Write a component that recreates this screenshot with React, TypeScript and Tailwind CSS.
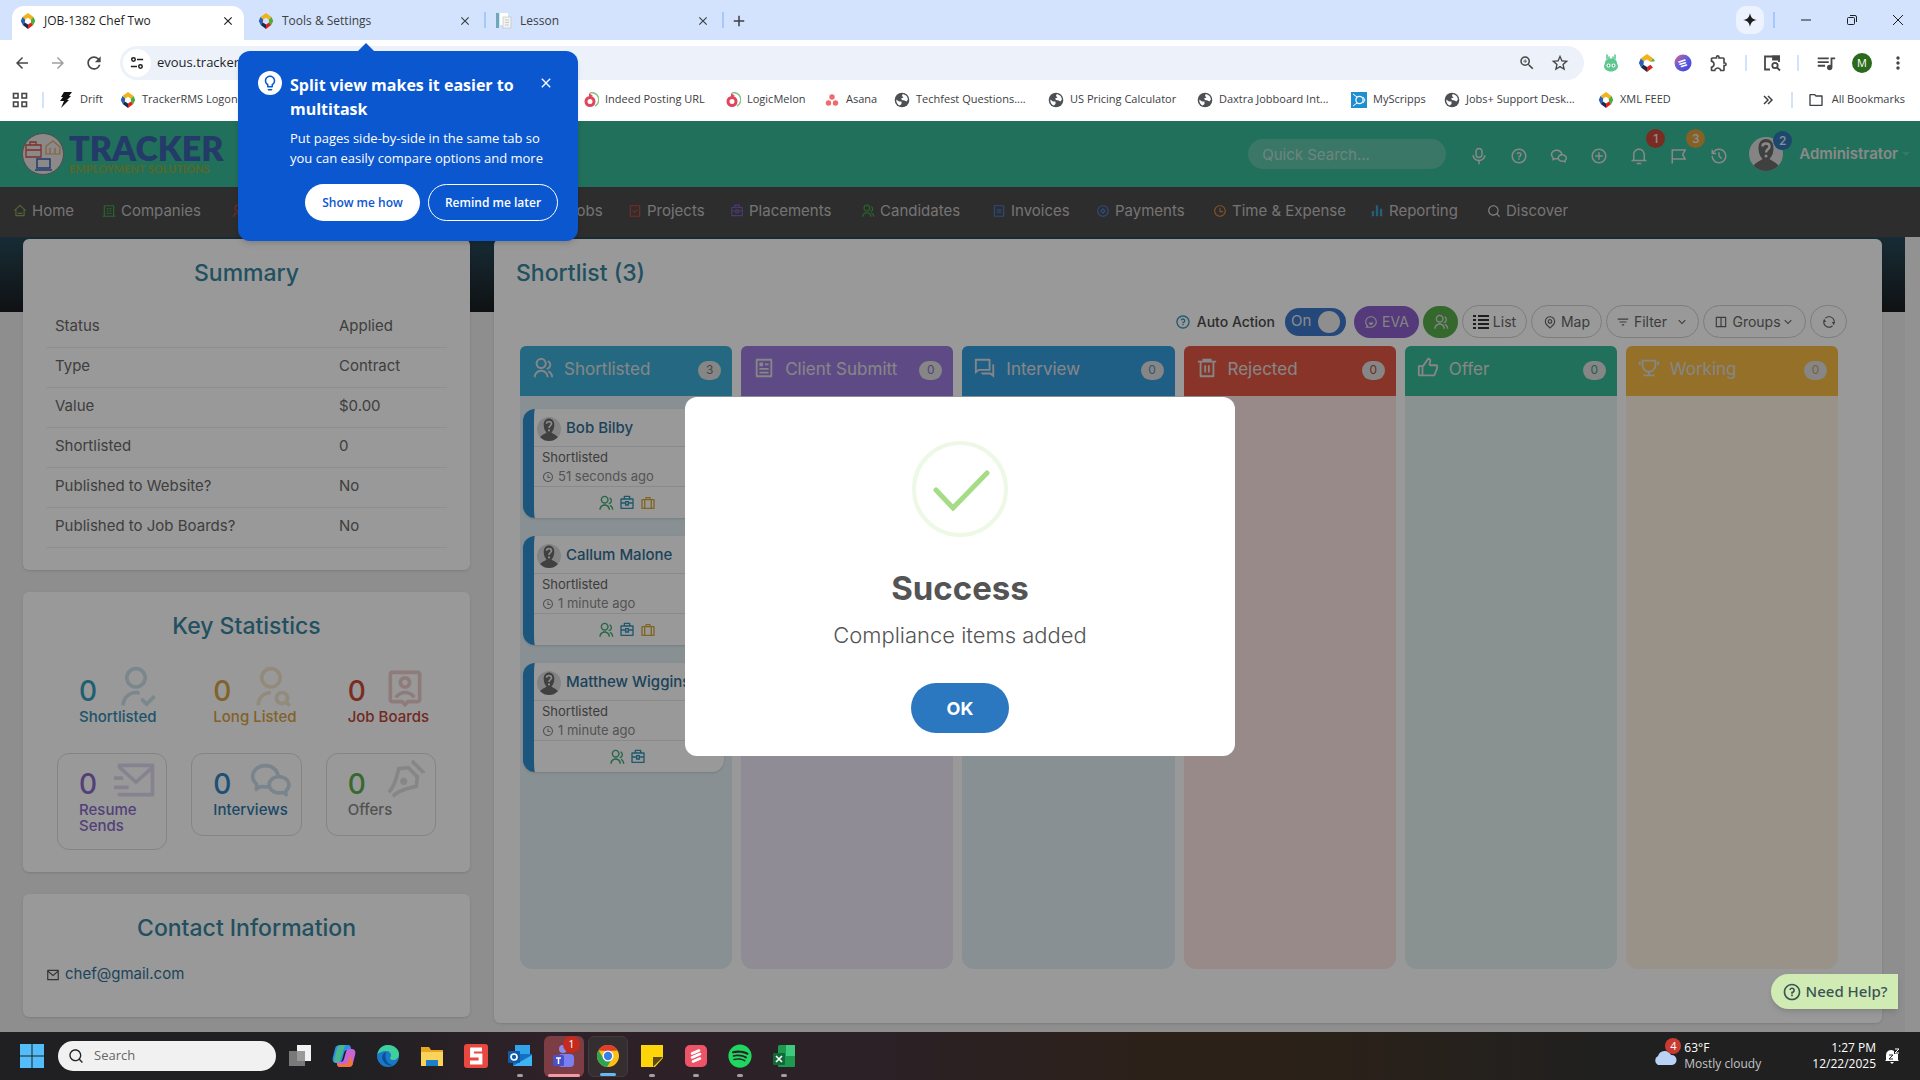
import React from "react";
import {
  RiHome3Line, RiBuilding4Line, RiContactsLine, RiBriefcaseLine, RiTaskLine,
  RiBriefcase4Line, RiGroupLine, RiBillLine, RiCopperCoinLine, RiTimeLine, RiBarChartFill, RiSearchLine,
  RiMicLine, RiQuestionLine, RiWechatLine, RiAddCircleLine, RiNotification3Line, RiFlag2Line, RiHistoryLine,
  RiUserFollowLine, RiUserSearchLine, RiAccountPinBoxLine, RiMailSendLine, RiPenNibLine, RiMailLine,
  RiArticleLine, RiQuestionAnswerLine, RiDeleteBin6Line, RiThumbUpLine, RiTrophyLine, RiSuitcaseLine,
  RiMapPinLine, RiFilter3Line, RiLayoutColumnLine, RiRefreshLine, RiArrowDownSLine,
  RiChatSmile3Line, RiFolderLine,
} from "react-icons/ri";
import {
  MdOutlineExtension, MdOutlineZoomIn, MdStarBorder, MdQueueMusic, MdMoreVert, MdArrowBack, MdArrowForward,
  MdRefresh, MdClose, MdAdd, MdOutlineLightbulb,
} from "react-icons/md";
import { FaSpotify } from "react-icons/fa";

type IconType = React.ComponentType<{ className?: string }>;

function Diamond({ className = "size-4", open = false }: { className?: string; open?: boolean }) {
  return (
    <svg viewBox="0 0 20 20" className={className} aria-hidden="true">
      <path d="M10 0 L17 5 L13.5 8.5 L10 6 L6.5 8 L3 5Z" fill="#f2b21c" />
      <path d="M3 5 L6.5 8 L6 12 L3.4 15 L1 10Z" fill="#2a5db5" />
      <path d="M3.4 15 L6 12 L10 14.5 L10 20Z" fill="#1b2a4a" />
      <path d="M10 20 L10 14.5 L13.8 12 L16.6 15Z" fill="#d8261c" />
      {!open && <path d="M16.6 15 L13.8 12 L13.5 8.5 L17 5 L19 10Z" fill="#4cae3a" />}
      {open && <path d="M13.5 8.5 L17 5 L19 8Z" fill="#4cae3a" />}
    </svg>
  );
}

function Melon() {
  return (
    <svg viewBox="0 0 16 16" className="size-4" aria-hidden="true">
      <path d="M7 1 A7 7 0 0 1 12 14" fill="none" stroke="#8bc48a" strokeWidth="1.6" />
      <circle cx="7" cy="9.5" r="4" fill="none" stroke="#e2445c" strokeWidth="3" />
      <path d="M6 1 L10 4 L6 6Z" fill="#e2445c" />
    </svg>
  );
}

function Globe() {
  return (
    <svg viewBox="0 0 16 16" className="size-4" aria-hidden="true">
      <circle cx="8" cy="8" r="7.3" fill="#4c5054" />
      <path d="M2.300 7.500 L5 9.500 L7.500 9.500 L7.500 12 L5.800 13.600 C3.500 12.700 2 10.500 2.300 7.500Z" fill="#fff" />
      <path d="M8.500 2.200 C11.500 2.200 13.800 4.500 13.900 7.500 L12.500 9.500 L10.500 8.500 L8 8 L7 6.500 L9.500 5.500 L8 4Z" fill="#fff" />
    </svg>
  );
}

function Person({ className }: { className: string }) {
  return (
    <svg viewBox="0 0 34 34" className={className} aria-hidden="true">
      <defs>
        <clipPath id="person-clip"><circle cx="17" cy="17" r="17" /></clipPath>
      </defs>
      <g clipPath="url(#person-clip)">
        <rect width="34" height="34" fill="#dcdcdc" />
        <path d="M3 34 C3 26 10 25 13.500 22 C10.500 19 9.500 15 9.500 11 C9.500 5 13 2 17 2 C21 2 24.500 5 24.500 11 C24.500 15 23.500 19 20.500 22 C24 25 31 26 31 34Z" fill="#6b6b6b" />
        <path d="M13.500 9.500 C13.500 5.500 20.500 5.500 20.500 9.500 C20.500 12.500 17 12 17 15.500" fill="none" stroke="#e6e6e6" strokeWidth="2.400" />
        <circle cx="17" cy="19" r="1.500" fill="#e6e6e6" />
      </g>
    </svg>
  );
}

const bookmarks: { label: string; icon: React.ReactNode; w: string }[] = [
  { label: "Indeed Posting URL", icon: <Melon />, w: "w-[142px]" },
  { label: "LogicMelon", icon: <Melon />, w: "w-[99px]" },
  {
    label: "Asana",
    icon: (
      <svg viewBox="0 0 16 16" className="size-4" aria-hidden="true">
        <circle cx="8" cy="5" r="2.700" fill="#f06a6a" /><circle cx="4.500" cy="11" r="2.700" fill="#f06a6a" /><circle cx="11.500" cy="11" r="2.700" fill="#f06a6a" />
      </svg>
    ),
    w: "w-[70px]",
  },
  { label: "Techfest Questions....", icon: <Globe />, w: "w-[154px]" },
  { label: "US Pricing Calculator", icon: <Globe />, w: "w-[149px]" },
  { label: "Daxtra Jobboard Int...", icon: <Globe />, w: "w-[154px]" },
  {
    label: "MyScripps",
    icon: (
      <svg viewBox="0 0 16 16" className="size-4" aria-hidden="true">
        <rect width="16" height="16" fill="#1f8fd0" />
        <path d="M2 2 L6 5 M2 14 L6 11" stroke="#fff" strokeWidth="1" />
        <circle cx="8.500" cy="8" r="3.600" fill="none" stroke="#fff" strokeWidth="1.200" />
        <path d="M12 5 L14 8 L12 11" fill="none" stroke="#fff" strokeWidth="1" />
      </svg>
    ),
    w: "w-[93px]",
  },
  { label: "Jobs+ Support Desk...", icon: <Globe />, w: "w-[154px]" },
  { label: "XML FEED", icon: <Diamond />, w: "w-[90px]" },
];

function TabStrip() {
  return (
    <div className="flex h-10 items-end bg-[#d3e3fd] text-[12px] text-[#3c4043]">
      <div className="ml-3 flex h-[34px] w-[232px] items-center rounded-t-xl bg-white pr-[9px] pb-1 pl-2">
        <Diamond className="size-4" />
        <span className="ml-2 flex-1 text-[#1f1f1f]">JOB-1382 Chef Two</span>
        <button aria-label="Close tab"><MdClose className="size-3.5 text-[#1f1f1f]" /></button>
      </div>
      <div className="flex h-[34px] w-60 items-center pr-3 pb-1 pl-3.5">
        <Diamond className="size-4" />
        <span className="ml-2 flex-1">Tools &amp; Settings</span>
        <button aria-label="Close tab"><MdClose className="size-3.5" /></button>
      </div>
      <div className="mb-3 h-4 w-0.5 bg-[#a8c7fa]" />
      <div className="flex h-[34px] w-[236px] items-center pr-3 pb-1 pl-2.5">
        <svg viewBox="0 0 16 16" className="size-4" aria-hidden="true">
          <rect x="0" y="0" width="3" height="15" fill="#6fa8b8" /><rect x="4" y="0" width="8" height="12" fill="#fff" /><rect x="7" y="4" width="8" height="11" fill="#f3f3f0" stroke="#b9bdc4" strokeWidth=".6" />
          <path d="M9 7h4M9 9.500h4M9 12h4" stroke="#b9bdc4" strokeWidth=".8" />
        </svg>
        <span className="ml-2 flex-1">Lesson</span>
        <button aria-label="Close tab"><MdClose className="size-3.5" /></button>
      </div>
      <div className="mb-3 h-4 w-0.5 bg-[#a8c7fa]" />
      <button aria-label="New tab" className="mb-2.5 ml-1.5"><MdAdd className="size-[18px]" /></button>
      <div className="mb-1.5 ml-auto flex items-center text-[#1f1f1f]">
        <button aria-label="Assistant" className="grid size-7 place-items-center rounded-[10px] bg-[#edf3fe]">
          <svg viewBox="0 0 16 16" className="size-3.5"><path d="M8 0C8.800 5 11 7.200 16 8 11 8.800 8.800 11 8 16 7.200 11 5 8.800 0 8 5 7.200 7.200 5 8 0Z" fill="currentColor" /></svg>
        </button>
        <div className="mx-[9px] h-4 w-0.5 bg-[#a8c7fa]" />
        <button aria-label="Minimize" className="grid w-11 place-items-center"><svg viewBox="0 0 12 12" className="size-3"><path d="M1 6h10" stroke="currentColor" /></svg></button>
        <button aria-label="Restore" className="grid w-12 place-items-center"><svg viewBox="0 0 12 12" className="size-3" fill="none" stroke="currentColor"><rect x="1.500" y="3.500" width="7" height="7" rx="1" /><path d="M4 1.500h5a1.500 1.500 0 0 1 1.500 1.500v5" /></svg></button>
        <button aria-label="Close" className="grid w-11 place-items-center"><svg viewBox="0 0 12 12" className="size-3"><path d="M1 1l10 10M11 1L1 11" stroke="currentColor" /></svg></button>
      </div>
    </div>
  );
}

function Toolbar() {
  return (
    <div className="flex h-[46px] items-center bg-white pr-3 pl-[13px] text-[#474747]">
      <button aria-label="Back"><MdArrowBack className="size-[18px]" /></button>
      <button aria-label="Forward" className="ml-[18px] text-[#a0a0a0]"><MdArrowForward className="size-[18px]" /></button>
      <button aria-label="Reload" className="ml-[17px]"><MdRefresh className="size-5" /></button>
      <div className="ml-4 flex h-[34px] flex-1 items-center rounded-full bg-[#ecf1fa] pr-3.5 pl-[3px]">
        <button aria-label="Site information" className="grid size-7 place-items-center rounded-full bg-white">
          <svg viewBox="0 0 16 16" className="size-3.5" fill="none" stroke="#1f1f1f" strokeWidth="1.700"><circle cx="4" cy="4" r="2" /><path d="M8 4h7M1 12h7" /><circle cx="12" cy="12" r="2" /></svg>
        </button>
        <input aria-label="Address" defaultValue="evous.tracker-rms.com" className="ml-1.5 min-w-0 flex-1 bg-transparent text-[13px] text-[#1f1f1f] outline-none" />
        <button aria-label="Zoom"><MdOutlineZoomIn className="size-[18px]" /></button>
        <button aria-label="Bookmark this tab" className="ml-3.5"><MdStarBorder className="size-5" /></button>
      </div>
      <div className="ml-[18px] flex items-center">
        <svg viewBox="0 0 18 18" className="size-[18px]" aria-hidden="true">
          <path d="M5 1v4M13 1v4M7 3v2M11 3v2" stroke="#3cba7c" strokeWidth="1.300" strokeLinecap="round" />
          <path d="M3 9c0-3 3-4.500 6-4.500S15 6 15 9l1 3c0 3-3 5.500-7 5.500S2 15 2 12Z" fill="#5cc78f" />
          <circle cx="6.500" cy="11.500" r="2" fill="#fff" /><circle cx="11.500" cy="11.500" r="2" fill="#fff" />
          <circle cx="6.500" cy="11.500" r=".9" fill="#2a9a62" /><circle cx="11.500" cy="11.500" r=".9" fill="#2a9a62" />
        </svg>
        <Diamond open className="ml-[18px] size-[18px]" />
        <svg viewBox="0 0 18 18" className="ml-[18px] size-[18px]" aria-hidden="true">
          <defs><linearGradient id="ext" x1="0" y1="0" x2="1" y2="1"><stop offset="0" stopColor="#e0608c" /><stop offset=".5" stopColor="#5b5be0" /><stop offset="1" stopColor="#4b3fd0" /></linearGradient></defs>
          <circle cx="9" cy="9" r="8.500" fill="url(#ext)" />
          <path d="M5 8l6-2M6 10.300l5.500-1.500M7.500 12.500l5-1.500" stroke="#fff" strokeWidth="1.600" strokeLinecap="round" />
        </svg>
        <button aria-label="Extensions" className="ml-[17px]"><MdOutlineExtension className="size-5" /></button>
        <div className="mx-4 h-4 w-0.5 bg-[#d3e3fd]" />
        <svg viewBox="0 0 18 18" className="size-[18px]" fill="none" stroke="#474747" strokeWidth="1.800" aria-hidden="true">
          <path d="M7 15.500H2V2.500h14V8" /><path d="M10 2.500h6v3h-6Z" fill="#474747" /><circle cx="12" cy="11.500" r="2.700" /><path d="M14 13.500l3 3" />
        </svg>
        <div className="mx-4 h-4 w-0.5 bg-[#d3e3fd]" />
        <MdQueueMusic className="size-[22px]" />
        <button aria-label="Profile" className="ml-[15px] grid size-5 place-items-center rounded-full bg-[#2b6a1c] text-[11px] text-white">M</button>
        <button aria-label="Menu" className="ml-4"><MdMoreVert className="size-5" /></button>
      </div>
    </div>
  );
}

function BookmarkBar() {
  return (
    <div className="flex h-[35px] items-center bg-white pb-2 pl-3 text-[11px] whitespace-nowrap text-[#3c4043]">
      <svg viewBox="0 0 16 16" className="size-4" fill="none" stroke="#474747" strokeWidth="1.600" aria-hidden="true"><rect x="1.500" y="1.500" width="4.500" height="4.500" /><rect x="10" y="1.500" width="4.500" height="4.500" /><rect x="1.500" y="10" width="4.500" height="4.500" /><rect x="10" y="10" width="4.500" height="4.500" /></svg>
      <div className="ml-3.5 h-4 w-0.5 bg-[#d3e3fd]" />
      <a href="#drift" className="ml-[14px] flex w-[62px] items-center gap-1.5">
        <svg viewBox="0 0 16 16" className="size-4" aria-hidden="true"><path d="M6 0h8l-3 4h2l-4 4h2L3 16l3-7H2l3-4H3Z" fill="#111" /></svg>
        Drift
      </a>
      <a href="#logon" className="flex w-[463px] items-center gap-1.5"><Diamond /> TrackerRMS Logon</a>
      {bookmarks.map((b) => (
        <a key={b.label} href="#bookmark" className={`flex items-center gap-1.5 ${b.w}`}>{b.icon}{b.label}</a>
      ))}
      <button className="mr-[18px] ml-auto" aria-label="More bookmarks">
        <svg viewBox="0 0 10 10" className="size-2.5" fill="none" stroke="#3c4043" strokeWidth="1.500"><path d="M1 1l4 4-4 4M5 1l4 4-4 4" /></svg>
      </button>
      <div className="h-4 w-0.5 bg-[#d3e3fd]" />
      <button className="mr-[15px] ml-[15px] flex items-center gap-2"><RiFolderLine className="size-4" />All Bookmarks</button>
    </div>
  );
}

function SplitViewTip() {
  return (
    <div className="absolute top-[51px] left-[238px] z-30 w-[340px] rounded-xl bg-[#0b57d0] p-5 text-white shadow-md">
      <div className="absolute -top-2 left-[120px] border-x-8 border-b-8 border-x-transparent border-b-[#0b57d0]" />
      <div className="flex items-start">
        <span className="grid size-6 place-items-center rounded-full bg-white text-[#0b57d0]"><MdOutlineLightbulb className="size-[18px]" /></span>
        <h2 className="mt-0.5 ml-2 flex-1 text-[16px] leading-6 font-bold">Split view makes it easier to<br />multitask</h2>
        <button aria-label="Dismiss" className="mt-1 mr-1"><MdClose className="size-4" /></button>
      </div>
      <p className="mt-[7px] ml-8 text-[13px] leading-5 whitespace-nowrap">Put pages side-by-side in the same tab so<br />you can easily compare options and more</p>
      <div className="mt-4 flex justify-end gap-2 text-[12px] font-semibold">
        <button className="h-[37px] w-[115px] rounded-full bg-white text-[#0b57d0]">Show me how</button>
        <button className="h-[37px] w-[130px] rounded-full border border-white">Remind me later</button>
      </div>
    </div>
  );
}

const nav: { label: string; Icon: IconType; color: string; w: string }[] = [
  { label: "Home", Icon: RiHome3Line, color: "text-[#8aa858]", w: "w-[89px]" },
  { label: "Companies", Icon: RiBuilding4Line, color: "text-[#3fae49]", w: "w-[130px]" },
  { label: "Contacts", Icon: RiContactsLine, color: "text-[#c94a3e]", w: "w-[317px]" },
  { label: "Jobs", Icon: RiBriefcaseLine, color: "text-[#3e8ec9]", w: "w-[79px]" },
  { label: "Projects", Icon: RiTaskLine, color: "text-[#c94a3e]", w: "w-[102px]" },
  { label: "Placements", Icon: RiBriefcase4Line, color: "text-[#7d5fc4]", w: "w-[131px]" },
  { label: "Candidates", Icon: RiGroupLine, color: "text-[#3fae49]", w: "w-[131px]" },
  { label: "Invoices", Icon: RiBillLine, color: "text-[#4a7fd0]", w: "w-[104px]" },
  { label: "Payments", Icon: RiCopperCoinLine, color: "text-[#4a7fd0]", w: "w-[117px]" },
  { label: "Time & Expense", Icon: RiTimeLine, color: "text-[#d98a3a]", w: "w-[157px]" },
  { label: "Reporting", Icon: RiBarChartFill, color: "text-[#3aa0c4]", w: "w-[117px]" },
  { label: "Discover", Icon: RiSearchLine, color: "text-[#dddddd]", w: "w-[90px]" },
];

function Badge({ children, color }: { children: string; color: string }) {
  return <span className={`absolute grid size-[19px] place-items-center rounded-full text-[12px] font-medium text-[#ededed] ${color}`}>{children}</span>;
}

function AppHeader() {
  return (
    <header>
      <div className="flex h-[66px] items-center bg-[#38bb98] pr-2.5 pl-[22px] text-[#e4e4e4]">
        <svg viewBox="0 0 42 42" className="size-[42px]" fill="none" aria-hidden="true">
          <circle cx="21" cy="21" r="20.500" fill="#e9e4e4" stroke="#8a7d80" />
          <path d="M4 12h15v12H4zM8 12V9h6v3M4 17h15" stroke="#d2524c" strokeWidth="1.300" />
          <path d="M24 21V13l7-5 7 6v7zM28 21v-6M33 21v-6" stroke="#dba764" strokeWidth="1.200" />
          <path d="M15 26h13v9H15zM13 37h17" stroke="#3c62b4" strokeWidth="1.500" />
        </svg>
        <div className="ml-[5px] font-[Lato] whitespace-nowrap">
          <div className="text-[34px] leading-[30px] font-extrabold text-[#3c62ae]">TRACKER</div>
          <div className="text-[11px] leading-3 font-bold text-[#93ad3e]">EMPLOYMENT SOLUTIONS</div>
        </div>
        <input aria-label="Quick Search" placeholder="Quick Search..." className="mr-6 ml-auto h-[30px] w-[198px] rounded-full bg-[#62c7ab] px-3.5 text-[15px] placeholder:text-[#b5dfd2]" />
        <div className="flex items-center gap-[22px] pt-1">
          <button aria-label="Voice"><RiMicLine className="size-[18px]" /></button>
          <button aria-label="Help"><RiQuestionLine className="size-[18px]" /></button>
          <button aria-label="Messages"><RiWechatLine className="size-[18px]" /></button>
          <button aria-label="Add"><RiAddCircleLine className="size-[18px]" /></button>
          <button aria-label="Alerts" className="relative"><RiNotification3Line className="size-[18px]" /><Badge color="bg-[#cc4a3a] -top-[18px] left-4">1</Badge></button>
          <button aria-label="Flags" className="relative"><RiFlag2Line className="size-[18px]" /><Badge color="bg-[#e0a03c] -top-[18px] left-4">3</Badge></button>
          <button aria-label="History"><RiHistoryLine className="size-[18px]" /></button>
        </div>
        <button className="relative ml-[21px] flex items-center text-[15px] font-semibold">
          <Person className="size-[34px]" />
          <Badge color="bg-[#2f78b8] -top-1.5 left-6">2</Badge>
          <span className="ml-4">Administrator</span>
          <span className="ml-1 border-x-4 border-t-4 border-x-transparent border-t-[#5ccaac]" />
        </button>
      </div>
      <nav className="flex h-[50px] items-center bg-[#4e4b4c] pb-0.5 pl-[13px] text-[15px] whitespace-nowrap text-[#c2c2c2]">
        {nav.map(({ label, Icon, color, w }) => (
          <a key={label} href={`#${label}`} className={`flex items-center gap-[5px] ${w}`}><Icon className={`size-3.5 ${color}`} />{label}</a>
        ))}
      </nav>
    </header>
  );
}

const summary = [
  ["Status", "Applied"], ["Type", "Contract"], ["Value", "$0.00"],
  ["Shortlisted", "0"], ["Published to Website?", "No"], ["Published to Job Boards?", "No"],
];

const stats: { label: string; Icon: IconType; num: string; text: string; box: string }[] = [
  { label: "Shortlisted", Icon: RiUserFollowLine, num: "text-[#369fbd]", text: "text-[#338cb0]", box: "border-transparent" },
  { label: "Long Listed", Icon: RiUserSearchLine, num: "text-[#d8a444]", text: "text-[#d8a444]", box: "border-transparent" },
  { label: "Job Boards", Icon: RiAccountPinBoxLine, num: "text-[#cc4a3a]", text: "text-[#bd4538]", box: "border-transparent" },
  { label: "Resume Sends", Icon: RiMailSendLine, num: "text-[#8c6cc9]", text: "text-[#8c6cc9]", box: "border-[#dcdcdc]" },
  { label: "Interviews", Icon: RiWechatLine, num: "text-[#2f85c4]", text: "text-[#2f78ac]", box: "border-[#dcdcdc]" },
  { label: "Offers", Icon: RiPenNibLine, num: "text-[#5cb04f]", text: "text-[#888888]", box: "border-[#dcdcdc]" },
];

const cardTitle = "text-center text-[23px] leading-8 font-medium text-[#3886a0]";

function Sidebar() {
  return (
    <aside className="flex w-[447px] shrink-0 flex-col gap-[22px] self-start text-[15px] text-[#696969]">
      <section className="rounded-md bg-white px-[23px] pt-[18px] pb-[22px] shadow">
        <h2 className={cardTitle}>Summary</h2>
        <table className="mt-[18px] w-full">
          <tbody>
            {summary.map(([k, v]) => (
              <tr key={k} className="h-10 border-b border-[#eeeeee]">
                <th scope="row" className="pb-0.5 pl-[9px] text-left font-normal">{k}</th>
                <td className="w-[108px] pb-0.5">{v}</td>
              </tr>
            ))}
          </tbody>
        </table>
      </section>
      <section className="rounded-md bg-white px-[34px] pt-[18px] pb-[22px] shadow">
        <h2 className={cardTitle}>Key Statistics</h2>
        <div className="mt-[18px] grid grid-cols-3 items-start gap-x-6 gap-y-2.5">
          {stats.map(({ label, Icon, num, text, box }) => (
            <div key={label} className={`min-h-[83px] rounded-xl border pr-2 pb-[15px] pl-[21px] ${box}`}>
              <div className="flex h-12 items-center justify-between pt-3">
                <span className={`text-[28px] font-medium ${num}`}>0</span>
                <Icon className={`-mt-2 size-11 opacity-25 ${text}`} />
              </div>
              <div className={`leading-4 font-medium ${label.includes("Resume") ? "" : "whitespace-nowrap"} ${text}`}>{label}</div>
            </div>
          ))}
        </div>
      </section>
      <section className="rounded-md bg-white px-[23px] pt-[18px] pb-[30px] shadow">
        <h2 className={cardTitle}>Contact Information</h2>
        <a href="mailto:chef@gmail.com" className="mt-[19px] flex h-6 items-center gap-[5px] text-[#337199]"><RiMailLine className="size-3.5 text-[#555555]" />chef@gmail.com</a>
      </section>
    </aside>
  );
}

const columns: { label: string; Icon: IconType; count: number; head: string; body: string; num: string }[] = [
  { label: "Shortlisted", Icon: RiGroupLine, count: 3, head: "bg-[#3cb0d8]", body: "bg-[#e3f0f5]", num: "text-[#777777]" },
  { label: "Client Submitt", Icon: RiArticleLine, count: 0, head: "bg-[#9d7ee0]", body: "bg-[#eee9fb]", num: "text-[#8c6cc9]" },
  { label: "Interview", Icon: RiQuestionAnswerLine, count: 0, head: "bg-[#359ee0]", body: "bg-[#e4f0f7]", num: "text-[#5590b8]" },
  { label: "Rejected", Icon: RiDeleteBin6Line, count: 0, head: "bg-[#e45843]", body: "bg-[#fce6e3]", num: "text-[#b84a3c]" },
  { label: "Offer", Icon: RiThumbUpLine, count: 0, head: "bg-[#38bb98]", body: "bg-[#e5f4f0]", num: "text-[#3f9a82]" },
  { label: "Working", Icon: RiTrophyLine, count: 0, head: "bg-[#f8bb44]", body: "bg-[#fdf3e3]", num: "text-[#c9a05a]" },
];

const people = [
  { name: "Bob Bilby", ago: "51 seconds ago", bag: true },
  { name: "Callum Malone", ago: "1 minute ago", bag: true },
  { name: "Matthew Wiggins", ago: "1 minute ago", bag: false },
];

function CandidateCard({ name, ago, bag }: { name: string; ago: string; bag: boolean }) {
  return (
    <article className="rounded-xl border-l-[11px] border-[#2f90d0] bg-white text-[13px] shadow">
      <div className="flex h-[38px] items-center gap-[5px] border-b border-[#e6e6e6] pt-0.5 pl-[3px]">
        <Person className="size-6" />
        <a href="#candidate" className="text-[15px] font-medium whitespace-nowrap text-[#2f6f96]">{name}</a>
      </div>
      <div className="h-10 border-b border-[#e6e6e6] pt-px pl-2 leading-[19px] text-[#666666]">
        <div>Shortlisted</div>
        <div className="flex items-center gap-1 text-[#8c8c8c]"><RiTimeLine className="size-3" />{ago}</div>
      </div>
      <div className="flex h-[31px] items-center justify-center gap-[5px] pr-1">
        <RiGroupLine className="size-4 text-[#3fa878]" />
        <RiBriefcase4Line className="size-4 text-[#3593b5]" />
        {bag && <RiSuitcaseLine className="size-4 text-[#d8a83c]" />}
      </div>
    </article>
  );
}

const pill = "flex h-[33px] items-center justify-center gap-1 rounded-full border border-[#d0d0d0] text-[#666666]";

function Shortlist() {
  return (
    <main className="flex flex-1 flex-col rounded-md bg-white pt-[18px] pb-[54px] shadow">
      <h1 className="pl-[22px] text-[23px] leading-8 font-medium text-[#3886a0]">Shortlist (3)</h1>
      <div className="mt-4 flex items-center justify-end gap-1 pr-[35px] text-[14px] whitespace-nowrap">
        <RiQuestionLine className="size-4 text-[#3796b4]" />
        <label htmlFor="auto" className="ml-0.5 font-medium text-[#4a4a4a]">Auto Action</label>
        <button id="auto" role="switch" aria-checked="true" className="mx-1 ml-1.5 flex h-7 w-[61px] items-center justify-between rounded-full bg-[#3f78cc] pr-1.5 pl-1.5 text-[15px] text-[#e6e6e6]">On<span className="size-[22px] rounded-full bg-[#ededed]" /></button>
        <button className="flex h-8 w-[65px] items-center justify-center gap-1 rounded-full bg-[#8c62cc] text-[#dddddd]"><RiChatSmile3Line className="size-3.5" />EVA</button>
        <button aria-label="Candidates" className="grid h-8 w-[35px] place-items-center rounded-full bg-[#57ae4c] text-[#dddddd]"><RiGroupLine className="size-4" /></button>
        <button className={`${pill} w-[65px]`}>
          <svg viewBox="0 0 16 16" className="size-4" stroke="#333333" strokeWidth="2" aria-hidden="true"><path d="M0 2h3M5 2h11M0 6h3M5 6h11M0 10h3M5 10h11M0 14h3M5 14h11" /></svg>List
        </button>
        <button className={`${pill} w-[71px]`}><RiMapPinLine className="size-3.5" />Map</button>
        <button className={`${pill} w-[93px]`}><RiFilter3Line className="size-3.5" />Filter<RiArrowDownSLine className="ml-1 size-3.5" /></button>
        <button className={`${pill} w-[103px]`}><RiLayoutColumnLine className="size-3.5" />Groups<RiArrowDownSLine className="-ml-1 size-3.5" /></button>
        <button aria-label="Refresh" className={`${pill} w-[37px]`}><RiRefreshLine className="size-3.5" /></button>
      </div>
      <div className="mt-2 flex flex-1 gap-[9px] pr-11 pl-[26px]">
        {columns.map(({ label, Icon, count, head, body, num }, i) => (
          <section key={label} className={`min-w-0 flex-1 overflow-hidden rounded-t-md rounded-b-xl ${body}`}>
            <header className={`flex h-[50px] items-center pr-[11px] pb-0.5 pl-3 text-[#e0e0e0] ${head}`}>
              <Icon className="mb-1 size-[22px] shrink-0" />
              <h3 className="ml-2.5 flex-1 text-[17px] whitespace-nowrap">{label}</h3>
              <span className={`grid h-[19px] w-[23px] shrink-0 place-items-center rounded-full bg-[#e0e0e0] text-[12px] ${num}`}>{count}</span>
            </header>
            {i === 0 && (
              <div className="flex flex-col gap-[18px] pt-[13px] pr-2 pl-[3px]">
                {people.map((p) => <CandidateCard key={p.name} {...p} />)}
              </div>
            )}
          </section>
        ))}
      </div>
    </main>
  );
}

function SuccessDialog() {
  return (
    <div className="absolute inset-0 z-10 grid place-items-center bg-black/40">
      <div role="dialog" aria-modal="true" aria-labelledby="dialog-title" className="flex w-[550px] flex-col items-center rounded-xl bg-white pt-11 pb-[23px] text-[#545454]">
        <svg viewBox="0 0 96 96" className="size-24" fill="none" aria-hidden="true">
          <circle cx="48" cy="48" r="46" stroke="#edf8e6" strokeWidth="4" />
          <path d="M24 49L41 67L75 32" stroke="#a5dc86" strokeWidth="5" strokeLinecap="round" />
        </svg>
        <h2 id="dialog-title" className="mt-[31px] text-[33px] leading-10 font-bold">Success</h2>
        <p className="mt-[13px] text-[22px] leading-7 font-light">Compliance items added</p>
        <button className="mt-[34px] h-[50px] w-[98px] rounded-full bg-[#2b77c0] text-[18px] font-bold text-white">OK</button>
      </div>
    </div>
  );
}

const taskIcons: { name: string; art: React.ReactNode; state?: string }[] = [
  { name: "Task View", art: <><rect x="9" y="1" width="14" height="16" fill="#f2f2f2" /><rect x="1" y="7" width="16" height="15" fill="#8a8a8a" fillOpacity=".85" /></> },
  { name: "Copilot", art: <><path d="M8 1h8c2 0 2.500 1 3 3l.5 2h-4c-2 0-3 1-3.500 3l-2 7c-.5 2-1.500 3-3.500 3H4c-3 0-4-3-3-6l2-8c.6-3 2-4 5-4Z" fill="#2f8fe8" /><path d="M3 13l2-8c.6-3 2-4 5-4h3L8 17c-.5 1.500-1 2-2 2H4c-2 0-2-3-1-6Z" fill="#46b98c" /><path d="M16 23H8c-2 0-2.500-1-3-3l-.500-2h4c2 0 3-1 3.500-3l2-7c.5-2 1.500-3 3.500-3H20c3 0 4 3 3 6l-2 8c-.6 3-2 4-5 4Z" fill="#c964d8" /><path d="M16 23H8c-2 0-2.500-1-3-3h7c3 0 4-2 5-5l1-4 3 8c-.6 3-2 4-5 4Z" fill="#f0743f" /></> },
  { name: "Edge", art: <><circle cx="12" cy="12" r="11" fill="#1b78c8" /><path d="M1.500 10C3 3 8 1 12 1c6 0 11 4 11 9 0 4-3 6-6 6-2 0-3-1-3-2 0-1 1-1 1-3 0-2-2-4-5-4-4 0-7 2-8.500 3Z" fill="#3fcf9a" /><path d="M10 8c-4 1-5 6-2 10 2 3 6 4 9 3-6 0-9-7-7-13Z" fill="#0c4f94" /></> },
  { name: "File Explorer", art: <><path d="M1 3h8l2 3h12v16H1Z" fill="#e8a820" /><path d="M1 8h22v14H1Z" fill="#fbd35a" /><path d="M6 22v-6h12v6Z" fill="#1d7fc4" /></> },
  { name: "Snagit", art: <><rect width="24" height="24" rx="3" fill="#e8483f" /><path d="M18 5.500H8v6h8.500v7H6" fill="none" stroke="#fff" strokeWidth="3.800" /></> },
  { name: "Outlook", state: "dot", art: <><rect x="7" y="1" width="15" height="14" fill="#31a3ec" /><path d="M5 10h19v12H5Z" fill="#1471c0" /><path d="M5 22l19-11v11Z" fill="#3fb4f4" /><rect y="7" width="12" height="12" rx="1" fill="#0f5ba8" /><circle cx="6" cy="13" r="3" fill="none" stroke="#fff" strokeWidth="1.700" /></> },
  { name: "Teams", state: "alert", art: <><circle cx="11" cy="5" r="4" fill="#8b8cf0" /><rect x="6" y="10" width="16" height="13" rx="4" fill="#7b7ff0" /><rect x="1" y="11" width="11" height="11" rx="1.500" fill="#4a50c8" /><path d="M4 14h5M6.500 14v6" stroke="#fff" strokeWidth="1.500" /></> },
  { name: "Chrome", state: "active", art: <><circle cx="12" cy="12" r="11" fill="#fbc116" /><path d="M2.500 6.500A11 11 0 0 1 21.500 6.500L12 7Z" fill="#e33b2e" /><path d="M2.500 6.500A11 11 0 0 0 11 23L16 15 8 15Z" fill="#31a350" /><circle cx="12" cy="12" r="5.500" fill="#fff" /><circle cx="12" cy="12" r="4.200" fill="#3a7ee8" /></> },
  { name: "Sticky Notes", state: "dot", art: <><path d="M1 1h22v13l-8 9H1Z" fill="#fcd60a" /><path d="M13 23v-10h10Z" fill="#5b4a1a" /></> },
  { name: "Scribe", state: "dot", art: <><rect x="1" y="1" width="22" height="22" rx="5" fill="#ef5367" /><path d="M8 9.500l7-3M8 13.500l8-3.500M9 17.500l7-3" stroke="#fff" strokeWidth="2.600" strokeLinecap="round" /></> },
  { name: "Spotify", state: "dot", art: <FaSpotify size={24} color="#1ed760" /> },
  { name: "Excel", state: "dot", art: <><rect x="6" y="1" width="17" height="22" rx="1.500" fill="#1e9a50" /><rect x="14" y="1" width="9" height="11" fill="#3ecb7e" /><rect x="1" y="9" width="12" height="12" rx="1" fill="#0f6a37" /><path d="M4 12l6 6M10 12l-6 6" stroke="#fff" strokeWidth="1.600" /></> },
];

function Taskbar() {
  return (
    <footer className="flex h-12 items-center bg-[linear-gradient(90deg,#202022_0%,#202022_18%,#2e2127_28%,#2b2126_46%,#2c2119_60%,#2a2119_70%,#202020_84%)] pl-5 text-[12px] text-white">
      <button aria-label="Start">
        <svg viewBox="0 0 24 24" className="size-6" fill="#52bdf8"><path d="M0 0h11.500v11.500H0zM12.500 0H24v11.500H12.500zM0 12.500h11.500V24H0zM12.500 12.500H24V24H12.500z" /></svg>
      </button>
      <label className="mr-0.5 ml-3.5 flex h-[30px] w-[218px] items-center gap-2.5 rounded-full bg-[#f1f1f1] pl-2.5 text-[#222222]">
        <RiSearchLine className="size-4" />
        <input aria-label="Search" placeholder="Search" className="w-36 bg-transparent text-[13px] placeholder:text-[#666666]" />
      </label>
      {taskIcons.map((t) => (
        <button
          key={t.name}
          aria-label={t.name}
          className={`relative mx-0.5 grid h-[41px] w-10 place-items-center rounded-md ${t.state === "alert" ? "bg-[#7d3d45]" : t.state === "active" ? "border border-[#403b3d] bg-[#352e31]" : ""}`}
        >
          <svg viewBox="0 0 24 24" className="size-6">{t.art}</svg>
          {t.name === "Teams" && <span className="absolute top-0 right-1 grid size-[17px] place-items-center rounded-full bg-[#c42b1c] text-[11px]">1</span>}
          {t.state === "dot" && <span className="absolute bottom-0 h-[3px] w-1.5 rounded-full bg-[#a0a0a0]" />}
          {t.state === "alert" && <span className="absolute bottom-0 h-[3px] w-8 rounded-full bg-[#f39aa5]" />}
          {t.state === "active" && <span className="absolute bottom-0 h-[3px] w-4 rounded-full bg-[#6ab8f0]" />}
        </button>
      ))}
      <div className="relative mr-[7px] ml-auto">
        <svg viewBox="0 0 24 24" className="size-6" aria-hidden="true"><path d="M5 21a5 5 0 0 1 0-9 7 7 0 0 1 13-1 5 5 0 0 1 1 10Z" fill="#b9d2f5" /></svg>
        <span className="absolute -top-1.5 left-3 grid size-4 place-items-center rounded-full bg-[#c93b30] text-[11px]">4</span>
      </div>
      <div className="w-32 leading-4">
        <div>63°F</div>
        <div className="text-[#c4c4c4]">Mostly cloudy</div>
      </div>
      <div className="text-right leading-4">
        <div>1:27 PM</div>
        <div>12/22/2025</div>
      </div>
      <button aria-label="Notifications" className="mr-5 ml-2">
        <svg viewBox="0 0 16 16" className="size-4" fill="#fff"><path d="M2 12V7a5 5 0 0 1 8-4v3h4v6l1 1H1ZM6 14h4l-2 2Z" /><path d="M5 7h4l-4 4h4" stroke="#202020" fill="none" /><path d="M11 1h4l-4 4h4" stroke="#fff" fill="none" /></svg>
      </button>
    </footer>
  );
}

export default function App() {
  return (
    <div className="relative flex min-h-screen flex-col overflow-hidden font-['Open_Sans',sans-serif]">
      <TabStrip />
      <Toolbar />
      <BookmarkBar />
      <SplitViewTip />
      <div className="relative flex flex-1 flex-col bg-[#ededed] font-[Inter,sans-serif]">
        <AppHeader />
        <div className="flex flex-1">
          <div className="flex flex-1 gap-6 bg-[linear-gradient(#284a5a,#1a1d20)] bg-[length:100%_75px] bg-no-repeat px-[23px] pt-0.5 pb-[9px]">
            <Sidebar />
            <Shortlist />
          </div>
          <div className="w-[15px] bg-[#f4f4f4]" />
        </div>
        <SuccessDialog />
        <button className="absolute right-[22px] bottom-[23px] z-20 flex h-[35px] w-[127px] items-center justify-center gap-1 rounded-l-full rounded-tr-sm rounded-br-lg bg-[#d0ecb4] font-['Noto_Sans'] text-[15px] font-medium whitespace-nowrap text-[#3c5254] shadow-md">
          <RiQuestionLine className="size-5" />Need Help?
        </button>
      </div>
      <Taskbar />
    </div>
  );
}
